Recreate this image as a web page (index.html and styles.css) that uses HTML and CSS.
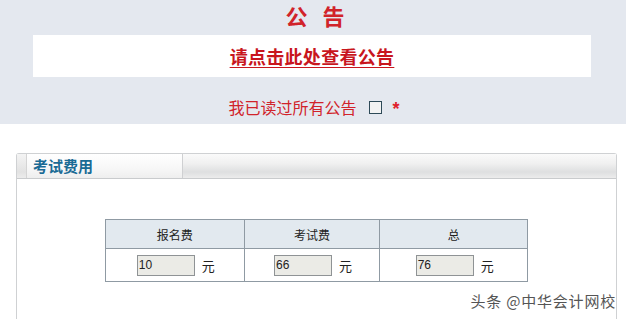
FILE: index.html
```html
<!DOCTYPE html>
<html lang="zh-CN">
<head>
<meta charset="utf-8">
<link rel="stylesheet" href="styles.css">
</head>
<body>
<div class="notice">
  <h1 class="title"><span>公</span><span>告</span></h1>
  <div class="linkbox"><a class="link" href="#">请点击此处查看公告</a></div>
  <div class="agree">我已读过所有公告<span class="check"></span><span class="star">*</span></div>
</div>
<div class="panel">
  <div class="phead">
    <div class="sliver"></div>
    <div class="tab">考试费用</div>
    <div class="rest"></div>
  </div>
  <div class="pbody">
    <table class="fees">
      <tr><th class="c1">报名费</th><th class="c2">考试费</th><th class="c3">总</th></tr>
      <tr>
        <td><span class="inp">10</span><span class="unit">元</span></td>
        <td><span class="inp">66</span><span class="unit">元</span></td>
        <td><span class="inp">76</span><span class="unit">元</span></td>
      </tr>
    </table>
  </div>
</div>
<div class="mark">头条 @中华会计网校</div>
</body>
</html>
```
FILE: styles.css
```css
html, body { margin: 0; padding: 0; background: #fff; }
body { font-family: "Noto Sans CJK SC", "Liberation Sans", sans-serif; width: 626px; height: 319px; overflow: hidden; position: relative; }
.notice { background: #e4e8ef; height: 124px; box-sizing: border-box; padding-top: 1px; }
.title { margin: 0; display: flex; justify-content: center; gap: 15px; color: #d1232a; font-size: 22px; font-weight: bold; line-height: 28px; height: 34px; padding-left: 4px; }
.linkbox { background: #fff; margin: 0 35px 0 33px; height: 42px; display: flex; align-items: center; justify-content: center; }
.link { color: #c8161d; font-size: 18px; font-weight: bold; text-decoration: underline; text-underline-offset: 3px; line-height: 24px; letter-spacing: 0.3px; }
.agree { display: flex; align-items: center; justify-content: center; color: #d1232a; font-size: 16px; margin-top: 18px; height: 24px; padding-left: 2px; }
.check { width: 11px; height: 11px; border: 1px solid #2e4a58; background: #f3f3f3; margin-left: 12px; }
.star { color: #e0202a; font-size: 18px; font-weight: bold; margin-left: 11px; font-family: "Liberation Sans", sans-serif; position: relative; top: 2px; }
.panel { margin: 29px 9px 0 16px; border: 1px solid #cfd1d3; border-bottom: none; border-radius: 3px 3px 0 0; height: 170px; }
.phead { display: flex; height: 24px; border-bottom: 1px solid #c9cbcd; background: linear-gradient(#fafafa, #f0f0f0 40%, #dedfe0 75%, #ececec); }
.sliver { width: 9px; border-right: 1px solid #d4d4d4; background: linear-gradient(#f4f4f4, #e2e2e2 75%, #ececec); }
.tab { width: 156px; border-right: 1px solid #cfd0d2; background: linear-gradient(#ffffff, #f7f7f7 60%, #eeeeee); color: #1a6b95; font-weight: bold; font-size: 15px; line-height: 24px; padding-left: 6px; box-sizing: border-box; }
.rest { flex: 1; }
.pbody { padding: 40px 0 0 88px; }
.fees { border-collapse: collapse; width: 423px; font-size: 12px; color: #222; }
.fees th, .fees td { border: 1px solid #8f9aa3; text-align: center; padding: 0; }
.fees th { background: #e2e9ef; height: 28px; font-weight: normal; }
.c1 { width: 138px; } .c2 { width: 135px; } .c3 { width: 147px; }
.fees td { height: 32px; }
.inp { display: inline-block; width: 55px; height: 19px; border: 1px solid #8f9395; background: #ebebe6; text-align: left; font-family: "Liberation Sans", sans-serif; font-size: 12px; line-height: 19px; padding-left: 1px; box-sizing: content-box; vertical-align: middle; margin-left: 2px; }
.unit { display: inline-block; margin-left: 7px; vertical-align: middle; font-size: 13px; }
.mark { position: absolute; right: 10px; top: 290px; color: #555; font-size: 15px; letter-spacing: 0.8px; }
```
